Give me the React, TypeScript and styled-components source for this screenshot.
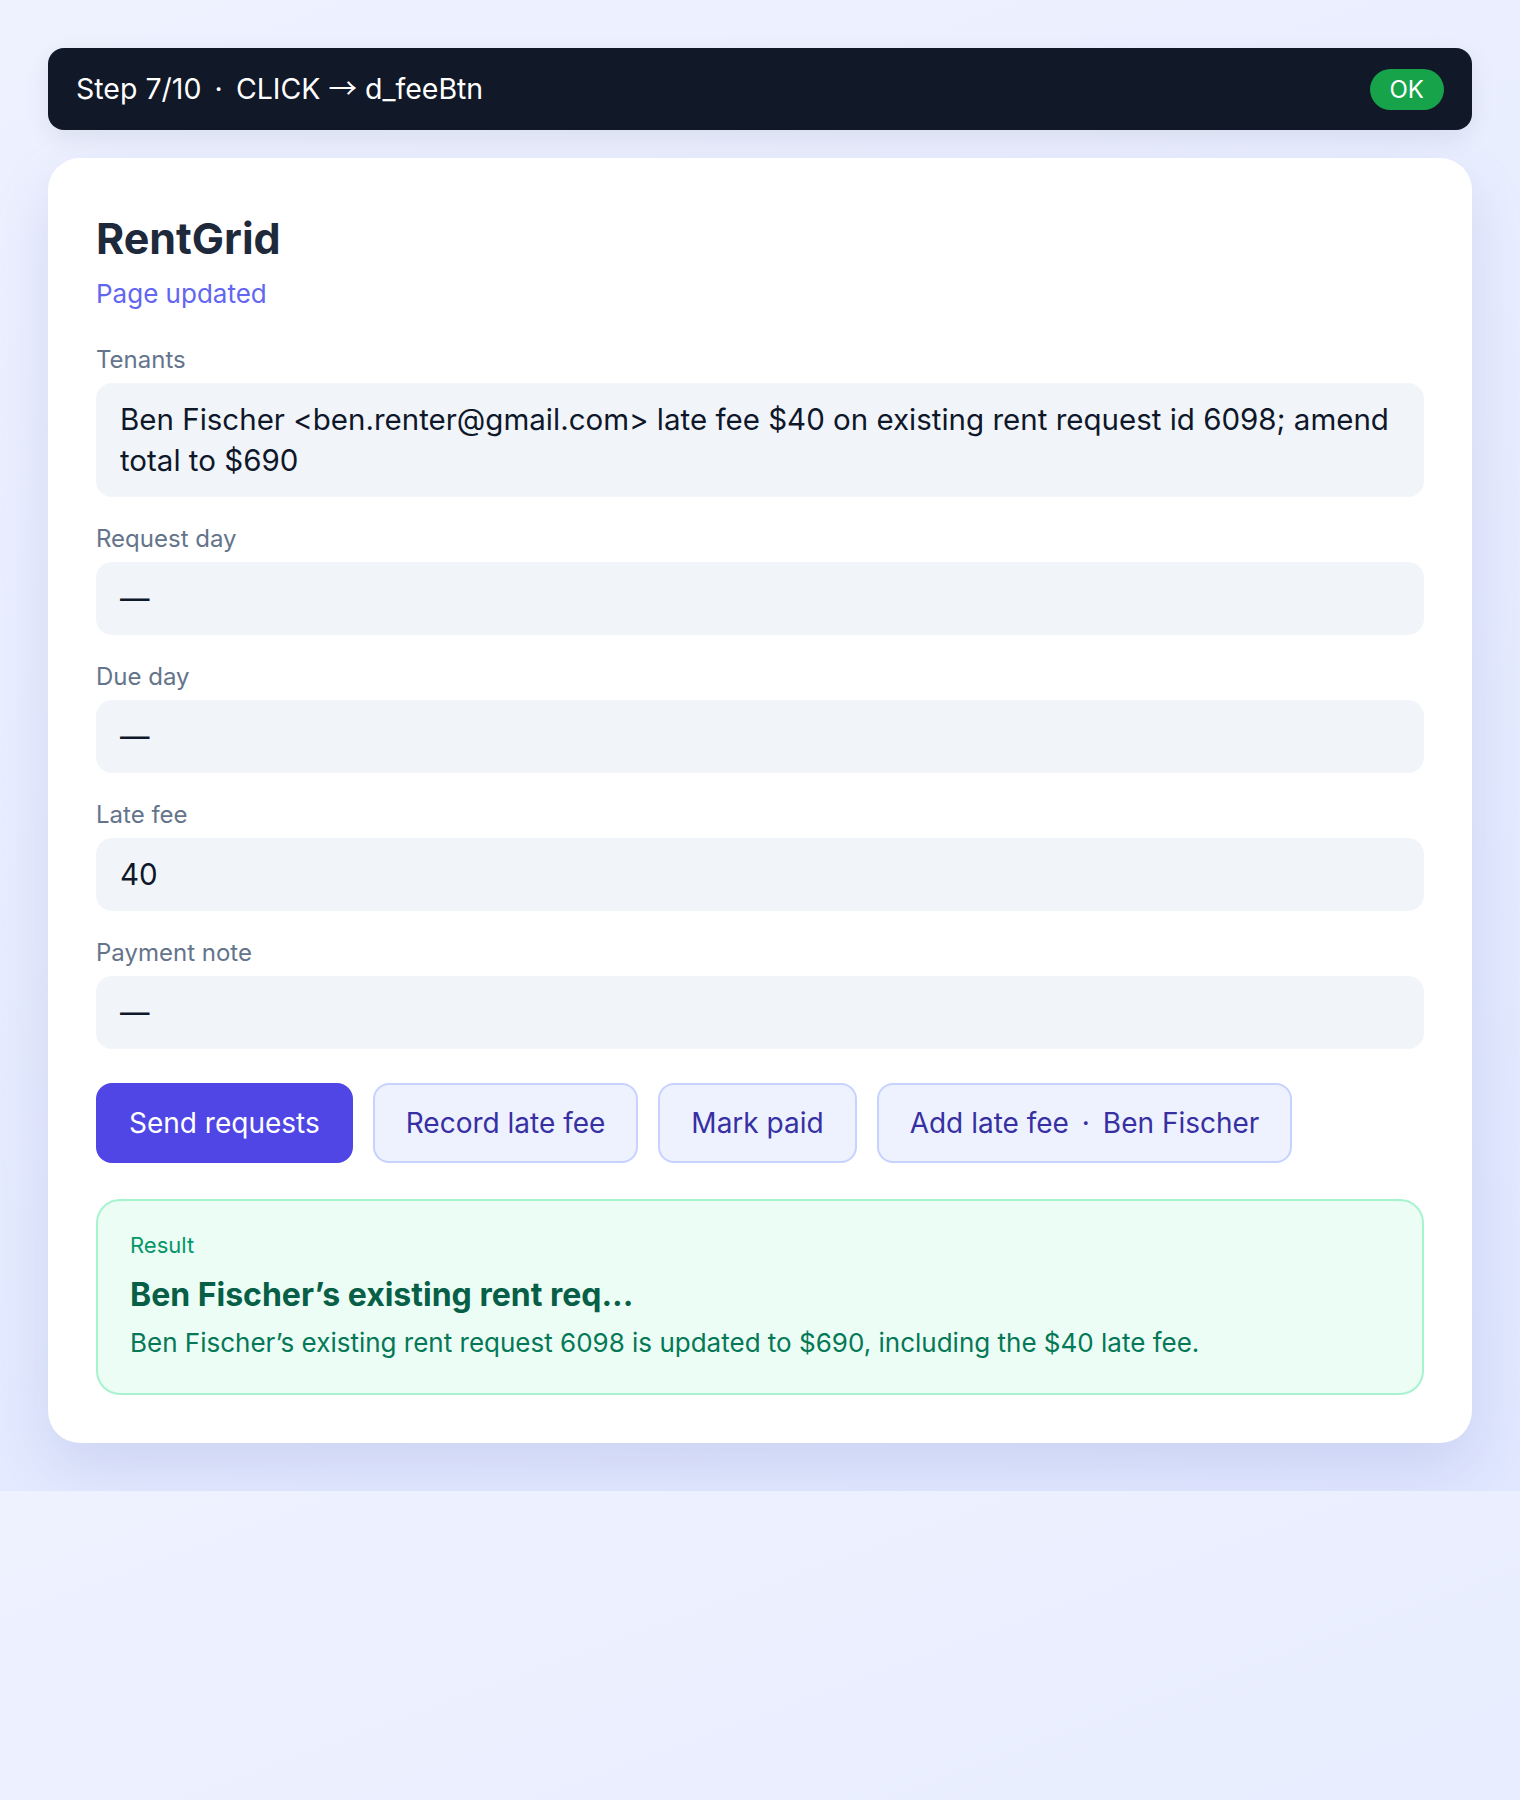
import React from "react";
import styled, { createGlobalStyle } from "styled-components";

const GlobalStyle = createGlobalStyle`
  html, body { margin: 0; padding: 0; }
  body {
    font-family: Inter, "Liberation Sans", Arial, sans-serif;
    background: linear-gradient(160deg, #eef2ff 0%, #e0e7ff 100%);
    color: #0f172a;
    -webkit-font-smoothing: antialiased;
  }
  * { box-sizing: border-box; }
`;

const Page = styled.div`
  padding: 48px;
  display: flex;
  flex-direction: column;
  gap: 28px;
`;

const StatusBar = styled.div`
  display: flex;
  align-items: center;
  justify-content: space-between;
  background: #111827;
  color: #ffffff;
  border-radius: 16px;
  padding: 20px 28px;
  font-size: 28.5px;
  line-height: 42px;
  box-shadow: 0 8px 24px rgba(17, 24, 39, 0.08);
`;

const StatusText = styled.span`
  white-space: nowrap;
`;

const Dot = styled.span`
  margin: 0 0.18em;
`;

const Arrow = styled.span`
  font-family: "Noto Sans CJK SC", Inter, sans-serif;
  line-height: 1;
`;

const Pill = styled.span<{ $tone: "ok" | "fail" }>`
  display: inline-flex;
  align-items: center;
  padding: 8px 20px;
  border-radius: 999px;
  font-size: 24px;
  line-height: 25px;
  color: #ffffff;
  background: ${(p) => (p.$tone === "ok" ? "#16a34a" : "#dc2626")};
`;

const Card = styled.main`
  background: #ffffff;
  border-radius: 32px;
  padding: 48px;
  box-shadow: 0 24px 60px rgba(67, 76, 160, 0.14);
  display: flex;
  flex-direction: column;
`;

const Title = styled.h1`
  margin: 0;
  font-size: 43px;
  line-height: 64px;
  font-weight: 700;
  color: #1e293b;
`;

const Subtitle = styled.div`
  margin-top: 6px;
  font-size: 26px;
  line-height: 36px;
  color: #6366f1;
`;

const Fields = styled.div`
  margin-top: 33px;
  display: flex;
  flex-direction: column;
  gap: 27px;
`;

const Field = styled.div`
  display: flex;
  flex-direction: column;
  gap: 8px;
`;

const Label = styled.label`
  font-size: 24px;
  line-height: 30px;
  color: #64748b;
`;

const Value = styled.div`
  background: #f1f5f9;
  border-radius: 16px;
  padding: 16px 24px;
  font-size: 29.5px;
  line-height: 41px;
  color: #0f172a;
`;

const Actions = styled.div`
  margin-top: 34px;
  display: flex;
  flex-wrap: wrap;
  gap: 20px;
`;

const Button = styled.button<{ $primary?: boolean }>`
  font-family: inherit;
  font-size: 28px;
  line-height: 42px;
  padding: 17px 31px;
  border-radius: 16px;
  border: 2px solid ${(p) => (p.$primary ? "#4f46e5" : "#c7d2fe")};
  background: ${(p) => (p.$primary ? "#4f46e5" : "#eef2ff")};
  color: ${(p) => (p.$primary ? "#ffffff" : "#3730a3")};
  cursor: pointer;
`;

const Result = styled.section`
  margin-top: 36px;
  border: 2px solid #a7f3d0;
  background: #ecfdf5;
  border-radius: 24px;
  padding: 30px 32px 32px;
  display: flex;
  flex-direction: column;
`;

const ResultLabel = styled.div`
  font-size: 22px;
  line-height: 28px;
  color: #059669;
`;

const ResultTitle = styled.div`
  margin-top: 16px;
  font-size: 32px;
  line-height: 40px;
  font-weight: 700;
  color: #065f46;
`;

const ResultBody = styled.div`
  margin-top: 10px;
  font-size: 26px;
  line-height: 36px;
  color: #047857;
`;

const fields = [
  {
    label: "Tenants",
    value:
      "Ben Fischer <ben.renter@gmail.com> late fee $40 on existing rent request id 6098; amend total to $690",
  },
  { label: "Request day", value: "—" },
  { label: "Due day", value: "—" },
  { label: "Late fee", value: "40" },
  { label: "Payment note", value: "—" },
];

export default function App() {
  return (
    <>
      <GlobalStyle />
      <Page>
        <StatusBar>
          <StatusText>
            Step 7/10 <Dot>·</Dot> CLICK <Arrow>→</Arrow> d_feeBtn
          </StatusText>
          <Pill $tone="ok">OK</Pill>
        </StatusBar>
        <Card>
          <Title>RentGrid</Title>
          <Subtitle>Page updated</Subtitle>
          <Fields>
            {fields.map((f) => (
              <Field key={f.label}>
                <Label>{f.label}</Label>
                <Value>{f.value}</Value>
              </Field>
            ))}
          </Fields>
          <Actions>
            <Button $primary>Send requests</Button>
            <Button>Record late fee</Button>
            <Button>Mark paid</Button>
            <Button>
              Add late fee <Dot>·</Dot> Ben Fischer
            </Button>
          </Actions>
          <Result>
            <ResultLabel>Result</ResultLabel>
            <ResultTitle>Ben Fischer’s existing rent req...</ResultTitle>
            <ResultBody>
              Ben Fischer’s existing rent request 6098 is updated to $690, including the $40 late fee.
            </ResultBody>
          </Result>
        </Card>
      </Page>
    </>
  );
}
